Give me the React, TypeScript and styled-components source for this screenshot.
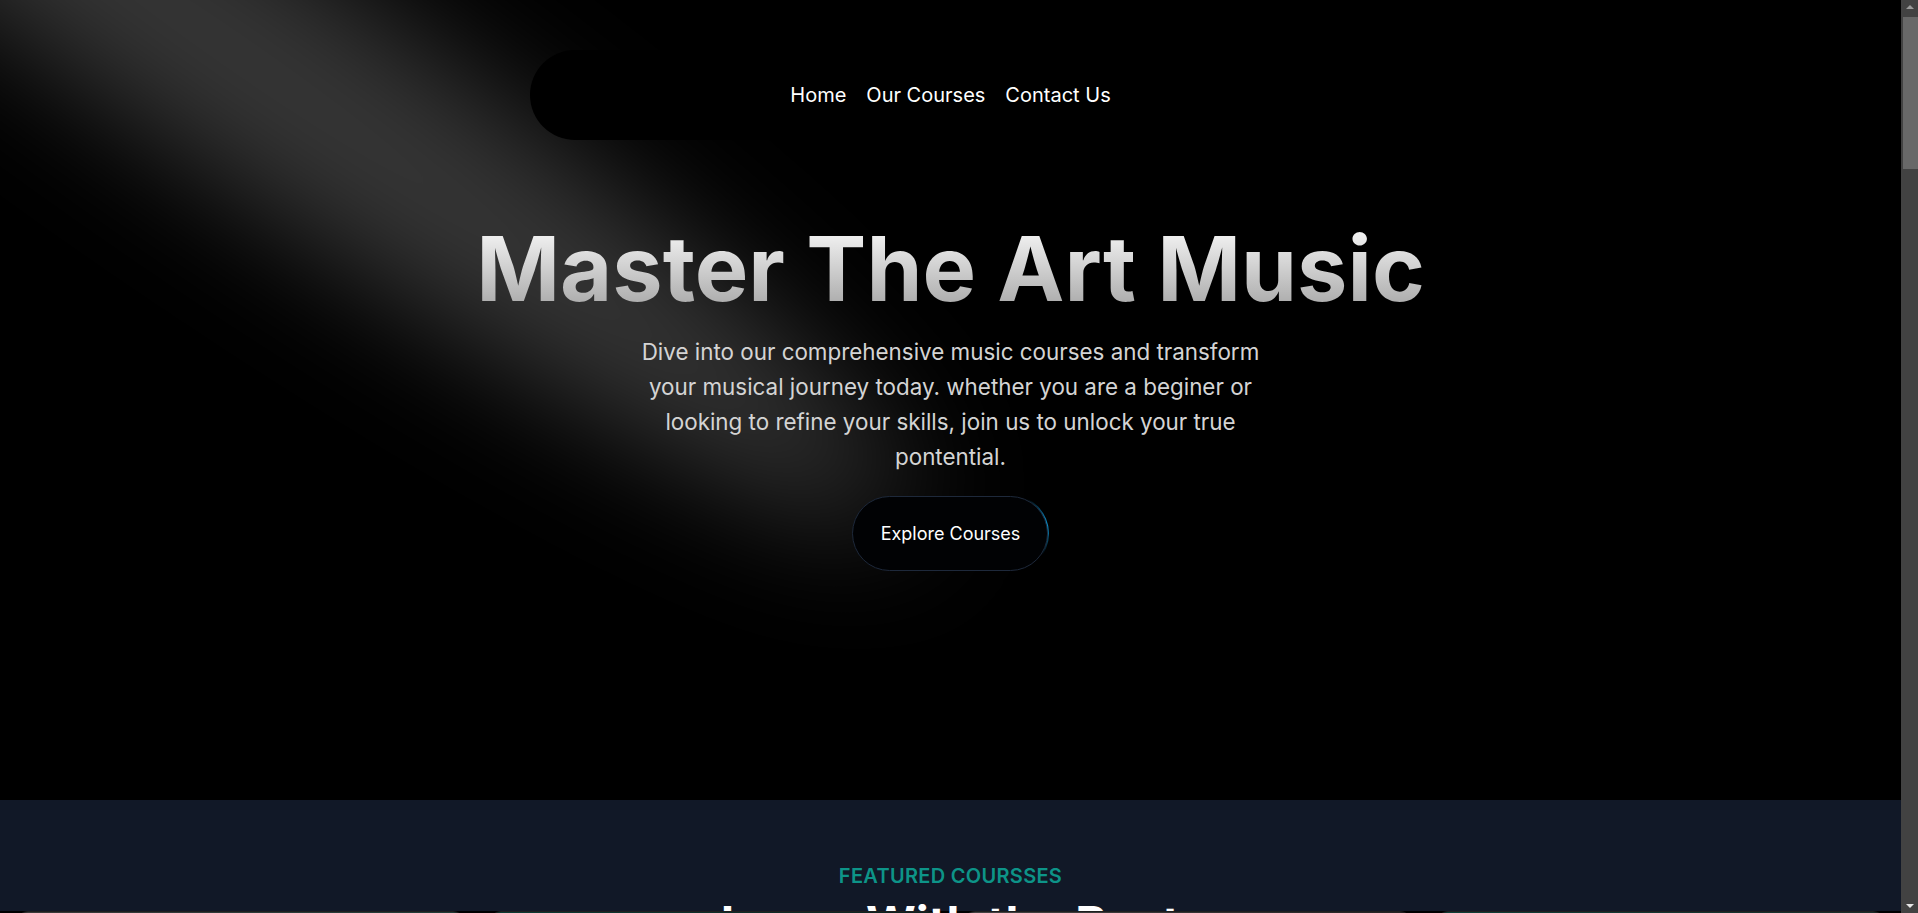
import React from 'react';
import styled, { createGlobalStyle } from 'styled-components';

const GlobalStyle = createGlobalStyle`
  html { color-scheme: dark; }
  body {
    margin: 0;
    padding-right: 17px;
    background: #000;
    font-family: Inter, "Noto Sans", sans-serif;
    -webkit-font-smoothing: antialiased;
  }
  * { box-sizing: border-box; }
`;

/* window scrollbar, as the screenshot shows it */
const ScrollRail = styled.div`
  position: fixed;
  top: 0;
  right: 0;
  width: 17px;
  height: 100vh;
  background: #424242;
  z-index: 100;
`;

const RailArrow = styled.span<{ $down?: boolean }>`
  position: absolute;
  left: 5px;
  ${({ $down }) => ($down ? 'bottom: 5px;' : 'top: 5px;')}
  width: 0;
  height: 0;
  border-left: 4px solid transparent;
  border-right: 4px solid transparent;
  ${({ $down }) => ($down ? 'border-top: 4px solid #e6e6e6;' : 'border-bottom: 4px solid #9a9a9a;')}
`;

const RailThumb = styled.span`
  position: absolute;
  top: 17px;
  left: 2px;
  right: 0;
  height: 152px;
  background: #686868;
`;

const Hero = styled.section`
  position: relative;
  height: 800px;
  overflow: hidden;
  background: #000;
  display: flex;
  flex-direction: column;
  align-items: center;
`;

const SpotlightSvg = styled.svg`
  position: absolute;
  left: 240px;
  top: -80px;
  width: 84%;
  height: 169%;
  transform: translate(-50%, -40%);
  pointer-events: none;
  z-index: 0;
`;

const Nav = styled.nav`
  position: relative;
  z-index: 2;
  margin-top: 50px;
  width: 842px;
  height: 90px;
  border-radius: 45px;
  background: #000;
  display: flex;
  align-items: center;
  justify-content: center;
  gap: 20px;
`;

const NavLink = styled.a`
  color: #fff;
  font-size: 20px;
  line-height: 28px;
  text-decoration: none;
`;

const HeroBody = styled.div`
  position: relative;
  z-index: 1;
  display: flex;
  flex-direction: column;
  align-items: center;
  margin-top: 84px;
`;

const Title = styled.h1`
  margin: 0;
  font-size: 90px;
  line-height: 1;
  font-weight: 700;
  background: linear-gradient(to bottom, #fafafa, #a3a3a3);
  -webkit-background-clip: text;
  background-clip: text;
  color: transparent;
`;

const Lead = styled.p`
  margin: 20px 0 0;
  max-width: 650px;
  font-size: 22.4px;
  line-height: 35px;
  color: #d4d4d4;
  text-align: center;
`;

const ButtonShell = styled.a`
  position: relative;
  margin-top: 21px;
  width: 198px;
  height: 77px;
  padding: 1px;
  border-radius: 39px;
  overflow: hidden;
  display: block;
  text-decoration: none;
`;

const ButtonGlow = styled.span`
  position: absolute;
  right: -30px;
  top: 0;
  width: 70px;
  height: 60px;
  background: radial-gradient(closest-side, rgba(14, 165, 233, 0.95), rgba(14, 165, 233, 0) 100%);
`;

const ButtonInner = styled.span`
  position: relative;
  display: flex;
  align-items: center;
  justify-content: center;
  width: 100%;
  height: 100%;
  border-radius: 38px;
  border: 1px solid #1e293b;
  background: #010204;
  color: #fff;
  font-size: 18px;
`;

const Featured = styled.section`
  height: 111px;
  background: #111827;
  display: flex;
  flex-direction: column;
  align-items: center;
  padding-top: 62px;
`;

const Eyebrow = styled.p`
  margin: 0;
  color: #0d9488;
  font-size: 20px;
  line-height: 28px;
  font-weight: 600;
  letter-spacing: 0.3px;
  text-transform: uppercase;
`;

const SectionHeading = styled.h2`
  margin: 10px 0 0;
  color: #fff;
  font-size: 48px;
  line-height: 1;
  font-weight: 700;
  text-align: center;
`;

const Courses = styled.section`
  background: #000;
  padding: 0 16px 120px;
`;

const CourseGrid = styled.div`
  display: grid;
  grid-template-columns: repeat(4, 1fr);
  gap: 24px;
`;

const CourseCard = styled.div`
  border-radius: 12px;
  overflow: hidden;
  background: #0b0b0b;
  border: 1px solid #1f1f1f;
`;

const CourseImage = styled.div<{ $tone: string }>`
  height: 260px;
  background: ${({ $tone }) => $tone};
`;

const CourseText = styled.div`
  padding: 20px;
  color: #d4d4d4;
  font-size: 16px;
  line-height: 24px;
  min-height: 160px;
`;

const CourseName = styled.h3`
  margin: 0 0 8px;
  color: #fff;
  font-size: 20px;
`;

const Block = styled.section<{ $h: number; $bg: string }>`
  min-height: ${({ $h }) => $h}px;
  background: ${({ $bg }) => $bg};
  display: flex;
  flex-direction: column;
  align-items: center;
  padding-top: 80px;
  color: #d4d4d4;
`;

const BlockTitle = styled.h2`
  margin: 0;
  color: #fff;
  font-size: 40px;
`;

const courses = [
  { name: 'Guitar Fundamentals', text: 'Learn the basics of guitar playing.', tone: 'linear-gradient(135deg,#3a3a3a,#0f3d36)' },
  { name: 'Piano for Beginners', text: 'Start your piano journey with ease.', tone: 'linear-gradient(135deg,#0b3b34,#121212)' },
  { name: 'Advanced Vocal Techniques', text: 'Refine your singing voice.', tone: 'linear-gradient(135deg,#444,#111)' },
  { name: 'Drum Mastery', text: 'Keep the rhythm like a pro.', tone: 'linear-gradient(135deg,#0d3f38,#222)' },
  { name: 'Music Theory', text: 'Understand how music works.', tone: 'linear-gradient(135deg,#333,#0a2f2a)' },
  { name: 'Songwriting', text: 'Write songs that move people.', tone: 'linear-gradient(135deg,#0c3933,#2a2a2a)' },
  { name: 'Music Production', text: 'Produce tracks in your bedroom.', tone: 'linear-gradient(135deg,#2c2c2c,#0c3a34)' },
  { name: 'Jazz Improvisation', text: 'Play freely over the changes.', tone: 'linear-gradient(135deg,#0b2f2b,#3b3b3b)' },
];

const moreSections = [
  { title: 'Why Choose Us', h: 900, bg: '#000' },
  { title: 'What Our Students Say', h: 700, bg: '#111827' },
  { title: 'Meet Our Instructors', h: 900, bg: '#000' },
  { title: 'Upcoming Webinars', h: 460, bg: '#111827' },
  { title: 'Contact', h: 300, bg: '#000' },
];

function Spotlight() {
  return (
    <SpotlightSvg viewBox="0 0 3787 2842" fill="none">
      <g filter="url(#spot-blur)">
        <ellipse
          cx="1924.71"
          cy="273.501"
          rx="1924.71"
          ry="273.501"
          transform="matrix(-0.822377 -0.568943 -0.568943 0.822377 3631.88 2291.09)"
          fill="white"
          fillOpacity="0.21"
        />
      </g>
      <defs>
        <filter
          id="spot-blur"
          x="0.860352"
          y="0.838989"
          width="3785.16"
          height="2840.26"
          filterUnits="userSpaceOnUse"
          colorInterpolationFilters="sRGB"
        >
          <feFlood floodOpacity="0" result="BackgroundImageFix" />
          <feBlend mode="normal" in="SourceGraphic" in2="BackgroundImageFix" result="shape" />
          <feGaussianBlur stdDeviation="151" />
        </filter>
      </defs>
    </SpotlightSvg>
  );
}

export default function App() {
  return (
    <>
      <GlobalStyle />
      <ScrollRail>
        <RailArrow />
        <RailThumb />
        <RailArrow $down />
      </ScrollRail>

      <Hero>
        <Spotlight />
        <Nav>
          <NavLink href="#">Home</NavLink>
          <NavLink href="#">Our Courses</NavLink>
          <NavLink href="#">Contact Us</NavLink>
        </Nav>
        <HeroBody>
          <Title>Master The Art Music</Title>
          <Lead>
            Dive into our comprehensive music courses and transform your musical journey today. whether you are a
            beginer or looking to refine your skills, join us to unlock your true pontential.
          </Lead>
          <ButtonShell href="#">
            <ButtonGlow />
            <ButtonInner>Explore Courses</ButtonInner>
          </ButtonShell>
        </HeroBody>
      </Hero>

      <Featured>
        <Eyebrow>Featured Coursses</Eyebrow>
        <SectionHeading>Learn With the Best</SectionHeading>
      </Featured>

      <Courses>
        <CourseGrid>
          {courses.map((c) => (
            <CourseCard key={c.name}>
              <CourseImage $tone={c.tone} />
              <CourseText>
                <CourseName>{c.name}</CourseName>
                {c.text}
              </CourseText>
            </CourseCard>
          ))}
        </CourseGrid>
      </Courses>

      {moreSections.map((s) => (
        <Block key={s.title} $h={s.h} $bg={s.bg}>
          <BlockTitle>{s.title}</BlockTitle>
        </Block>
      ))}
    </>
  );
}
